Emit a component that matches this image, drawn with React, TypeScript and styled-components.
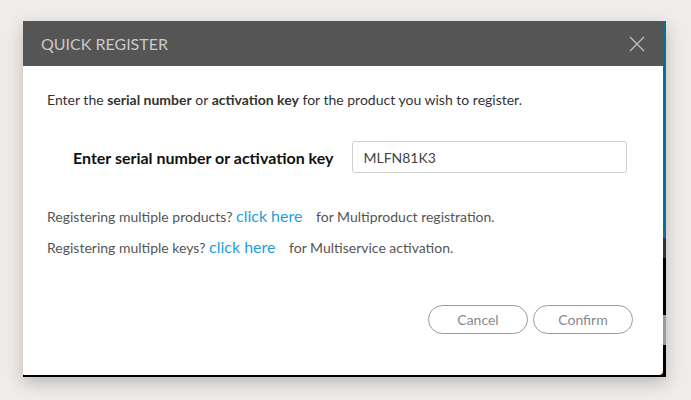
import styled, { createGlobalStyle } from "styled-components";

const Global = createGlobalStyle`
  html, body {
    margin: 0;
    background: #f0ece9;
    font-family: Lato, "Liberation Sans", sans-serif;
  }
`;

export default function App() {
  return (
    <Page>
      <Global />
      <Frame>
        <Modal>
          <Header>
            <Title>QUICK REGISTER</Title>
            <Close aria-label="close">
              <svg width="16" height="16" viewBox="0 0 16 16">
                <path d="M1 1 L15 15 M15 1 L1 15" stroke="#bdbdbd" strokeWidth="1.4" fill="none" />
              </svg>
            </Close>
          </Header>
          <Body>
            <Intro>
              Enter the <b>serial number</b> or <b>activation key</b> for the product you wish to register.
            </Intro>
            <Field>
              <Label>Enter serial number or activation key</Label>
              <Input defaultValue="MLFN81K3" />
            </Field>
            <Note>
              Registering multiple products? <Link href="#">click here</Link> for Multiproduct registration.
            </Note>
            <Note>
              Registering multiple keys? <Link href="#">click here</Link> for Multiservice activation.
            </Note>
            <Actions>
              <Button>Cancel</Button>
              <Button>Confirm</Button>
            </Actions>
          </Body>
        </Modal>
        <Strip>
          <Segment $color="#0b6f97" $size={217} />
          <Segment $color="#333333" $size={20} />
          <Segment $color="#000000" $size={57} />
          <Segment $color="#9a9a9a" $size={30} />
          <Segment $color="#000000" $size={30} />
        </Strip>
      </Frame>
    </Page>
  );
}

const Page = styled.div`
  height: 400px;
  padding: 21px 0 0 23px;
  box-sizing: border-box;
`;

const Frame = styled.div`
  width: 643px;
  height: 356px;
  display: flex;
  background: #000;
  padding-bottom: 2px;
  box-sizing: border-box;
  box-shadow: 0 6px 16px rgba(0, 0, 0, 0.22);
`;

const Modal = styled.div`
  flex: 1;
  display: flex;
  flex-direction: column;
  background: #fff;
  border-radius: 0 0 4px 1px;
`;

const Strip = styled.div`
  width: 3px;
  display: flex;
  flex-direction: column;
`;

const Segment = styled.div<{ $color: string; $size: number }>`
  height: ${(p) => p.$size}px;
  background: ${(p) => p.$color};
`;

const Header = styled.div`
  height: 45px;
  background: #555555;
  display: flex;
  align-items: center;
  justify-content: space-between;
  padding: 0 18px 0 18px;
`;

const Title = styled.h2`
  margin: 0;
  font-size: 16px;
  font-weight: 400;
  color: #c9c9c9;
`;

const Close = styled.button`
  border: 0;
  background: none;
  padding: 0;
  display: flex;
  cursor: pointer;
`;

const Body = styled.div`
  flex: 1;
  display: flex;
  flex-direction: column;
  padding: 25px 24px 0 24px;
  color: #333;
`;

const Intro = styled.p`
  margin: 0;
  font-size: 14px;
  line-height: 18px;
  b {
    font-weight: 700;
  }
`;

const Field = styled.div`
  display: flex;
  align-items: center;
  margin: 32px 0 0 26px;
  gap: 19px;
`;

const Label = styled.label`
  font-size: 16px;
  font-weight: 700;
  color: #111;
`;

const Input = styled.input`
  width: 275px;
  height: 32px;
  box-sizing: border-box;
  border: 1px solid #d0d0d0;
  border-radius: 3px;
  padding: 0 10px;
  font-family: inherit;
  font-size: 14px;
  color: #444;
  outline: none;
`;

const Note = styled.p`
  margin: 33px 0 0 0;
  font-size: 14px;
  color: #555;
  line-height: 20px;
  & + & {
    margin-top: 10px;
  }
`;

const Link = styled.a`
  color: #1ea0e0;
  font-size: 16px;
  text-decoration: none;
  margin-right: 10px;
`;

const Actions = styled.div`
  display: flex;
  justify-content: flex-end;
  gap: 5px;
  margin-top: 47px;
  padding-right: 6px;
`;

const Button = styled.button`
  width: 100px;
  height: 29px;
  border: 1px solid #9a9a9a;
  border-radius: 15px;
  background: #fff;
  color: #888;
  font-family: inherit;
  font-size: 14px;
`;
